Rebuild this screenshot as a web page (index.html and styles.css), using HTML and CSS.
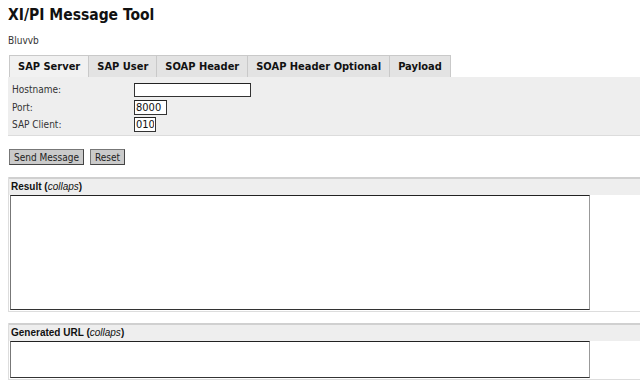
FILE: index.html
```html
<!DOCTYPE html>
<html lang="en">
<head>
    <meta charset="UTF-8">
    <title>XI/PI Message Tool</title>
    <link rel="stylesheet" href="styles.css">
</head>
<body>
    <h1 class="title">XI/PI Message Tool</h1>
    <div class="subtitle">Bluvvb</div>

    <ul class="tabs">
        <li class="tab active">SAP Server</li>
        <li class="tab">SAP User</li>
        <li class="tab">SOAP Header</li>
        <li class="tab">SOAP Header Optional</li>
        <li class="tab">Payload</li>
    </ul>

    <div class="panel">
        <div class="field">
            <label for="host">Hostname:</label>
            <input id="host" class="input-host" type="text" value="">
        </div>
        <div class="field">
            <label for="port">Port:</label>
            <input id="port" class="input-port" type="text" value="8000">
        </div>
        <div class="field">
            <label for="client">SAP Client:</label>
            <input id="client" class="input-client" type="text" value="010">
        </div>
    </div>

    <div class="actions">
        <button class="btn">Send Message</button>
        <button class="btn">Reset</button>
    </div>

    <div class="section">
        <div class="section-head">Result (<i>collaps</i>)</div>
        <textarea class="result"></textarea>
    </div>

    <div class="section">
        <div class="section-head">Generated URL (<i>collaps</i>)</div>
        <textarea class="url"></textarea>
    </div>
</body>
</html>
```

FILE: styles.css
```css
body {
    margin: 0;
    padding: 6px 0 0 8px;
    font-family: "DejaVu Sans Condensed", "DejaVu Sans", sans-serif;
    font-size: 10px;
    color: #222;
    background: #fff;
}

.title {
    font-size: 15.5px;
    font-weight: bold;
    margin: 0;
    height: 22px;
    line-height: 18px;
    color: #111;
}

.subtitle {
    font-size: 10px;
    height: 27px;
    padding-top: 2px;
    box-sizing: border-box;
    line-height: 22px;
    color: #333;
}

.tabs {
    list-style: none;
    margin: 0;
    padding: 0 0 0 1px;
    display: flex;
    height: 22px;
}

.tab {
    box-sizing: border-box;
    height: 22px;
    padding: 0 8px;
    line-height: 21px;
    font-size: 11px;
    font-weight: bold;
    color: #111;
    background: #e3e3e3;
    border: 1px solid #c9c9c9;
    border-bottom: none;
    border-left: none;
}

.tab:first-child {
    border-left: 1px solid #c9c9c9;
}

.tab.active {
    background: #f1f1f1;
}

.panel {
    background: #eeeeee;
    border-bottom: 1px solid #dcdcdc;
    height: 59px;
    padding-top: 4px;
    box-sizing: border-box;
}

.field {
    display: flex;
    align-items: center;
    height: 17.5px;
}

.field label {
    width: 122px;
    padding-left: 4px;
    color: #333;
}

.field input {
    box-sizing: border-box;
    font-family: "DejaVu Sans Condensed", "DejaVu Sans", sans-serif;
    font-size: 11px;
    border: 1px solid #333;
    border-top-color: #222;
    padding: 0 1px;
    height: 14px;
    background: #fff;
    color: #111;
}

.input-host {
    width: 117px;
    height: 13px;
}

.input-port {
    width: 33px;
    height: 15px !important;
}

.input-client {
    width: 22px;
    height: 15px !important;
}

.actions {
    display: flex;
    gap: 6px;
    padding: 13px 0 0 1px;
    height: 28px;
}

.btn {
    font-family: "DejaVu Sans Condensed", "DejaVu Sans", sans-serif;
    font-size: 10px;
    height: 16px;
    padding: 0 4px;
    background: #cacaca;
    color: #222;
    border: 1px solid #444;
    border-top-color: #777;
    border-left-color: #777;
}

.section {
    border-left: 1px solid #ddd;
    border-bottom: 1px solid #ddd;
    margin-bottom: 11px;
}

.section-head {
    font-family: "Liberation Sans", Arial, sans-serif;
    font-size: 10px;
    font-weight: bold;
    color: #111;
    background: #eeeeee;
    border-top: 2px solid #d0d0d0;
    height: 16px;
    line-height: 16px;
    padding-left: 2px;
}

.section-head i {
    font-weight: normal;
}

textarea {
    display: block;
    box-sizing: border-box;
    width: 580px;
    margin: 0 0 1px 1px;
    border: 1px solid #777;
    border-top-color: #222;
    border-right-color: #999;
    border-bottom-color: #333;
    resize: none;
    background: #fff;
}

.result {
    height: 115px;
}

.url {
    height: 37px;
}
```
